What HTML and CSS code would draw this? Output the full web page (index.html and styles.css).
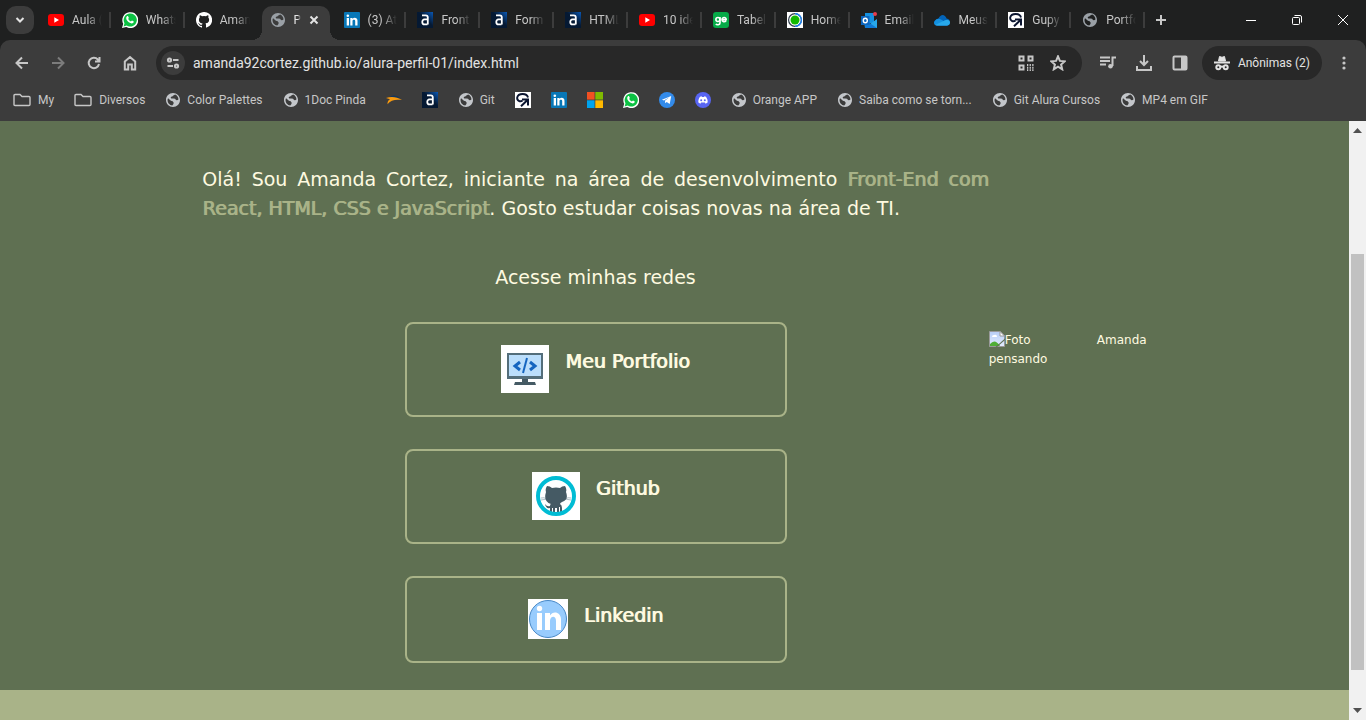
FILE: index.html
```html
<!DOCTYPE html>
<html lang="pt-BR">
<head>
<meta charset="utf-8">
<title>Portfolio</title>
<link rel="stylesheet" href="styles.css">
</head>
<body>
<svg class="sprite" aria-hidden="true">
  <defs>
    <linearGradient id="navy" x1="0" y1="1" x2="1" y2="0"><stop offset="0.55" stop-color="#051933"/><stop offset="1" stop-color="#0a58b5"/></linearGradient>
    <linearGradient id="sky" x1="0" y1="0" x2="0" y2="1"><stop offset="0" stop-color="#b7cdf5"/><stop offset="1" stop-color="#e3edff"/></linearGradient>
  </defs>
  <symbol id="youtube" viewBox="0 0 16 16"><rect y="2" width="16" height="12" rx="3" fill="#f00"/><path d="M6.3 5.3v5.4L11 8z" fill="#fff"/></symbol>
  <symbol id="whatsapp" viewBox="0 0 16 16"><path d="M0 16l1.2-4.2A8 8 0 1 1 4.200 15z" fill="#fff"/><path d="M1.600 14.400l.9-3.100A6.600 6.600 0 1 1 4.700 13.600z" fill="#0cc143"/><path d="M5 4.300c.5-.5 1-.4 1.200.1l.6 1.300c.1.400-.6 1-.6 1.200.6 1.200 1.500 2 2.700 2.500.3 0 .8-1 1.100-.9l1.500.7c.5.300 0 1.400-.5 1.800-1 .8-2.600.3-4.200-.7C5.200 9.200 4.200 7.500 4.200 6c0-.7.3-1.300.8-1.700z" fill="#fff"/></symbol>
  <symbol id="github" viewBox="0 0 16 16"><path fill="#fff" d="M8 0C3.580 0 0 3.580 0 8c0 3.540 2.290 6.530 5.470 7.590.4.070.55-.17.55-.38v-1.340c-2.230.48-2.690-1.070-2.690-1.070-.36-.92-.89-1.170-.89-1.170-.72-.5.060-.49.060-.49.8.060 1.230.83 1.230.83.71 1.220 1.870.87 2.330.66.070-.52.280-.87.5-1.070-1.780-.2-3.640-.89-3.640-3.950 0-.87.310-1.590.82-2.150-.08-.2-.36-1.020.08-2.120 0 0 .67-.21 2.200.82a7.600 7.600 0 0 1 4 0c1.530-1.040 2.200-.82 2.200-.82.44 1.100.16 1.920.08 2.120.51.560.82 1.270.82 2.150 0 3.070-1.870 3.750-3.650 3.950.29.250.54.730.54 1.480v2.200c0 .21.150.46.550.38A8 8 0 0 0 8 0z"/></symbol>
  <symbol id="globe" viewBox="2 2 20 20"><path d="M12 2C6.480 2 2 6.480 2 12s4.480 10 10 10 10-4.480 10-10S17.520 2 12 2zM5 9.500L9 13q3 0 4 3 .2 2-2 3.700C7 19.500 4.200 16 4.200 12q0-1.500.8-2.500zM15 4.300q4.500 2 4.800 7-1.500 1.300-3.500.7-.8-2-3.800-2l-3-.3q-1.500-1-.2-2.200 2-.3 2.700-1.500z"/></symbol>
  <symbol id="linkedin" viewBox="0 0 16 16"><rect width="16" height="16" rx="1" fill="#0877b7"/><circle cx="3.800" cy="3.800" r="1.300" fill="#fff"/><path d="M2.700 6H5v7.500H2.700zM6.300 6h2.200v1c1.300-2 5-1.500 5 1.700v4.800h-2.300V9.300c0-2-2.700-1.900-2.700 0v4.200H6.300z" fill="#fff"/></symbol>
  <symbol id="alura" viewBox="0 0 16 16"><rect width="16" height="16" fill="url(#navy)"/><path d="M5 3.300h3.700c1.600 0 2.100.9 2.100 2.300v7M10.300 7.400H7.500c-3 0-2.900 5 0 5h3" fill="none" stroke="#fff" stroke-width="1.800"/></symbol>
  <symbol id="ge" viewBox="0 0 16 16"><rect width="16" height="16" rx="3" fill="#06aa48"/><g fill="none" stroke="#fff" stroke-width="1.600"><circle cx="4.900" cy="7.500" r="2"/><path d="M7 5v6c0 2.100-3.200 2.100-4.200 1M9.200 7.700h4c.1-2.700-4.200-2.900-4.200 0 0 2.200 2.700 2.500 4.100 1.200"/></g></symbol>
  <symbol id="home-ring" viewBox="0 0 16 16"><path fill="#fff" d="M0 0h16v16H0z"/><circle cx="8" cy="8" r="6.400" fill="none" stroke="#303f4c" stroke-width="1.200"/><path d="M8 1.600a6.400 6.400 0 0 1 0 12.800" fill="none" stroke="#1687ff" stroke-width="1.200"/><circle cx="8" cy="8" r="4.500" fill="#11b900"/></symbol>
  <symbol id="outlook" viewBox="0 0 16 16"><path fill="#1490df" d="M4 1h9v10H4z"/><path fill="#28a8ea" d="M3 8l6 4 7-5v9H4z"/><path fill="#0f78d4" d="M4 8l12 8H4z"/><path fill="#0d65bc" d="M0 4h8.500v9H0z"/><ellipse cx="4.300" cy="8.500" rx="2" ry="2.300" fill="none" stroke="#fff" stroke-width="1.400"/><circle cx="14" cy="2" r="2" fill="#e83b4a"/></symbol>
  <symbol id="onedrive" viewBox="0 0 16 16"><path fill="#0364b8" d="M2 8c1-1 1.800-1.500 2.500-1.500C6.500 1.800 11 1.800 12.600 6.500c2.300.1 3.400 2 3.400 3.600 0 2-1.200 3.400-3.300 3.400H3C-.7 13.500-.9 8.600 2 8z"/><path fill="#1490df" d="M1 9c1-2.500 4-3 6-1.500l8 5a3 3 0 0 1-2.300 1H3C.7 13.500-.2 11.500.200 10z"/><path fill="#28a8ea" d="M1.200 13L11 8.200c3-1.500 5 .4 5 2.300s-1.200 3-3.300 3H3z"/></symbol>
  <symbol id="gupy" viewBox="0 0 16 16"><path fill="#fff" d="M0 0h16v16H0z"/><path d="M13 5.500C12 .8 3.200.8 2.200 5.500c-.4 3.300 3 4.700 5.300 3" fill="none" stroke="#0b1530" stroke-width="1.900"/><path d="M7 7.500h6v6M12.500 8L6 14.200" fill="none" stroke="#0b1530" stroke-width="2"/></symbol>
  <symbol id="folder" viewBox="0 0 18 16"><path d="M2 2.500h5l2 2h7q1 0 1 1v7q0 1-1 1H2q-1 0-1-1v-9q0-1 1-1z" fill="none" stroke="currentColor" stroke-width="1.400"/></symbol>
  <symbol id="swoosh" viewBox="0 0 16 16"><path fill="#12355f" d="M4 4.700Q9 2 14 6l-7-.5z"/><path fill="#f79a10" d="M0 6c5-2 11-1.300 16 2-6-1-11.500 0-14.500 4.200C1.400 9.500 2.500 8 4 7.300z"/></symbol>
  <symbol id="microsoft" viewBox="0 0 16 16"><path fill="#f25022" d="M0 0h7.600v7.600H0z"/><path fill="#7fba00" d="M8.300 0H16v7.600H8.300z"/><path fill="#00a4ef" d="M0 8.300h7.600V16H0z"/><path fill="#ffb900" d="M8.300 8.300H16V16H8.300z"/></symbol>
  <symbol id="telegram" viewBox="0 0 16 16"><circle cx="8" cy="8" r="8" fill="#338bea"/><path fill="#fff" d="M2.900 7.800l9.300-3.700-1.500 8-3-2.200-1.500 1.400-.2-2.500 4.200-3.500-5.200 3.300z"/></symbol>
  <symbol id="discord" viewBox="0 0 16 16"><circle cx="8" cy="8" r="8" fill="#5865f2"/><path fill="#fff" d="M5 4.700l1.600-.4.400.7h2l.4-.7 1.600.4c1.300 1.900 1.900 3.700 1.600 5.800l-2 1.200-.7-1.100H6.100l-.7 1.100-2-1.200c-.3-2.100.4-4.100 1.600-5.800z"/><g fill="#5865f2"><circle cx="6.200" cy="8.200" r="1"/><circle cx="9.800" cy="8.200" r="1"/></g></symbol>
</svg>

<header class="browser">
  <div class="tabstrip">
    <button class="tab-search" aria-label="Pesquisar guias"><svg width="10" height="10" viewBox="0 0 10 10"><path d="M1.500 3L5 6.500 8.500 3"/></svg></button>
    <nav class="tabs" aria-label="Guias">
      <button class="tab"><svg class="icon"><use href="#youtube"/></svg><span>Aula (</span></button>
      <button class="tab"><svg class="icon"><use href="#whatsapp"/></svg><span>Whats</span></button>
      <button class="tab"><svg class="icon"><use href="#github"/></svg><span>Aman</span></button>
      <button class="tab active"><svg class="icon globe muted"><use href="#globe"/></svg><span>P</span><svg class="close" viewBox="0 0 10 10"><path d="M1.500 1.500l7 7M8.500 1.500l-7 7"/></svg></button>
      <button class="tab"><svg class="icon"><use href="#linkedin"/></svg><span>(3) At</span></button>
      <button class="tab"><svg class="icon"><use href="#alura"/></svg><span>Front</span></button>
      <button class="tab"><svg class="icon"><use href="#alura"/></svg><span>Form</span></button>
      <button class="tab"><svg class="icon"><use href="#alura"/></svg><span>HTML</span></button>
      <button class="tab"><svg class="icon"><use href="#youtube"/></svg><span>10 ide</span></button>
      <button class="tab"><svg class="icon"><use href="#ge"/></svg><span>Tabel</span></button>
      <button class="tab"><svg class="icon"><use href="#home-ring"/></svg><span>Home</span></button>
      <button class="tab"><svg class="icon"><use href="#outlook"/></svg><span>Email</span></button>
      <button class="tab"><svg class="icon"><use href="#onedrive"/></svg><span>Meus</span></button>
      <button class="tab"><svg class="icon"><use href="#gupy"/></svg><span>Gupy</span></button>
      <button class="tab"><svg class="icon globe muted"><use href="#globe"/></svg><span>Portfo</span></button>
    </nav>
    <button class="new-tab" aria-label="Nova guia"><svg width="12" height="12" viewBox="0 0 12 12"><path d="M6 1v10M1 6h10"/></svg></button>
    <div class="window-controls">
      <button aria-label="Minimizar"><svg width="12" height="12" viewBox="0 0 12 12"><path d="M1 6.500h10"/></svg></button>
      <button aria-label="Restaurar"><svg width="12" height="12" viewBox="0 0 12 12"><rect x="1.500" y="3.500" width="7" height="7" rx="1"/><path d="M3.500 1.500H9q1.500 0 1.500 1.500v5.500"/></svg></button>
      <button aria-label="Fechar"><svg width="12" height="12" viewBox="0 0 12 12"><path d="M1 1l10 10M11 1L1 11"/></svg></button>
    </div>
  </div>

  <div class="toolbar">
    <button class="tool" aria-label="Voltar"><svg class="icon" viewBox="0 0 16 16"><path d="M14 8H3M8 2.500L2.500 8 8 13.500"/></svg></button>
    <button class="tool dim" aria-label="Avançar"><svg class="icon" viewBox="0 0 16 16"><path d="M2 8h11M8 2.500L13.500 8 8 13.500"/></svg></button>
    <button class="tool" aria-label="Recarregar"><svg class="icon" viewBox="0 0 16 16"><path d="M13 9a5.200 5.200 0 1 1-1.200-4.500L13.500 6M13.500 2v4.500H9"/></svg></button>
    <button class="tool" aria-label="Página inicial"><svg class="icon" viewBox="0 0 16 16"><path d="M2.800 6.500L8 2l5.200 4.500v8H9.800V9.500H6.200v5H2.800z"/></svg></button>
    <div class="omnibox">
      <button class="site-info" aria-label="Informações do site"><svg class="icon" viewBox="0 0 16 16"><circle cx="4.500" cy="5" r="1.600"/><path d="M8 5h5.500M2.500 11H8"/><circle cx="11.500" cy="11" r="1.600"/></svg></button>
      <input type="text" aria-label="Endereço" value="amanda92cortez.github.io/alura-perfil-01/index.html">
      <button class="tool" aria-label="Código QR"><svg class="icon" viewBox="0 0 16 16"><path d="M1.500 1.500h4v4h-4zM10.500 1.500h4v4h-4zM1.500 10.500h4v4h-4z"/><path d="M9 10h7M9 12.700h7M9 15.200h7" stroke-dasharray="1.300 1.300"/></svg></button>
      <button class="tool" aria-label="Favoritar"><svg class="icon" viewBox="0 0 16 16"><path d="M8 1.300l1.900 4.600 4.900.4-3.700 3.200 1.100 4.800L8 11.700l-4.200 2.600 1.100-4.800L1.200 6.300l4.900-.4z"/></svg></button>
    </div>
    <button class="tool" aria-label="Mídia"><svg class="icon" viewBox="0 0 16 16"><path d="M0 2.500h10M0 6h10M0 9.500h6M16 2.500h-3.500V11"/><circle cx="10.500" cy="11.300" r="2.300" fill="currentColor" stroke="none"/></svg></button>
    <button class="tool" aria-label="Downloads"><svg class="icon" viewBox="0 0 16 16"><path d="M8 0v10M4 6l4 4 4-4M1 11v4h14v-4"/></svg></button>
    <button class="tool" aria-label="Painel lateral"><svg class="icon" viewBox="0 0 16 16"><rect x="1.500" y="1.500" width="13" height="13" rx="1"/><path d="M9 1h6v14H9z" fill="currentColor" stroke="none"/></svg></button>
    <button class="incognito"><svg class="icon" viewBox="0 0 16 16"><path d="M4.500 6l1-4.500L8 2.300l2.500-.8 1 4.500z" fill="currentColor" stroke-width="1"/><path d="M0 7.500h16M6.500 12q1.500-1 3 0"/><circle cx="4.300" cy="12.300" r="2"/><circle cx="11.700" cy="12.300" r="2"/></svg>Anônimas (2)</button>
    <button class="tool menu" aria-label="Menu"><svg class="icon" viewBox="0 0 16 16"><g fill="currentColor" stroke="none"><circle cx="8" cy="3" r="1.600"/><circle cx="8" cy="8" r="1.600"/><circle cx="8" cy="13" r="1.600"/></g></svg></button>
  </div>

  <nav class="bookmarks" aria-label="Favoritos">
    <a href="#"><svg class="icon folder"><use href="#folder"/></svg>My</a>
    <a href="#"><svg class="icon folder"><use href="#folder"/></svg>Diversos</a>
    <a href="#"><svg class="icon globe"><use href="#globe"/></svg>Color Palettes</a>
    <a href="#"><svg class="icon globe"><use href="#globe"/></svg>1Doc Pinda</a>
    <a href="#" aria-label="Loja"><svg class="icon"><use href="#swoosh"/></svg></a>
    <a href="#" aria-label="Alura"><svg class="icon"><use href="#alura"/></svg></a>
    <a href="#"><svg class="icon globe"><use href="#globe"/></svg>Git</a>
    <a href="#" aria-label="Gupy"><svg class="icon"><use href="#gupy"/></svg></a>
    <a href="#" aria-label="LinkedIn"><svg class="icon"><use href="#linkedin"/></svg></a>
    <a href="#" aria-label="Microsoft"><svg class="icon"><use href="#microsoft"/></svg></a>
    <a href="#" aria-label="WhatsApp"><svg class="icon"><use href="#whatsapp"/></svg></a>
    <a href="#" aria-label="Telegram"><svg class="icon"><use href="#telegram"/></svg></a>
    <a href="#" aria-label="Discord"><svg class="icon"><use href="#discord"/></svg></a>
    <a href="#"><svg class="icon globe"><use href="#globe"/></svg>Orange APP</a>
    <a href="#"><svg class="icon globe"><use href="#globe"/></svg>Saiba como se torn...</a>
    <a href="#"><svg class="icon globe"><use href="#globe"/></svg>Git Alura Cursos</a>
    <a href="#"><svg class="icon globe"><use href="#globe"/></svg>MP4 em GIF</a>
  </nav>
</header>

<div class="viewport">
  <div class="page">
    <main class="presentation">
      <section class="about">
        <p class="intro">Olá! Sou Amanda Cortez, iniciante na área de desenvolvimento <strong>Front-End com React, HTML, CSS e JavaScript</strong>. Gosto estudar coisas novas na área de TI.</p>
        <h2 class="subtitle">Acesse minhas redes</h2>
        <div class="links">
          <a class="link-card" href="#">
            <svg width="48" height="48" viewBox="0 0 48 48"><path fill="#fff" d="M0 0h48v48H0z"/><path fill="#455a64" d="M21 33h6v4h7l1 3H13l1-3h7z"/><path fill="#546e7a" d="M6 8h36v26H6z"/><path fill="#bbdefb" d="M8 10h32v21H8z"/><path d="M19 17l-5 4 5 4M29 17l5 4-5 4" fill="none" stroke="#1565c0" stroke-width="3"/><path d="M26 13l-4 15" stroke="#1565c0" stroke-width="2"/></svg>
            <span>Meu Portfolio</span>
          </a>
          <a class="link-card" href="#">
            <svg width="48" height="48" viewBox="0 0 48 48"><path fill="#fff" d="M0 0h48v48H0z"/><path d="M9 26q3-1 6 1M9 28l6-1M39 26q-3-1-6 1M39 28l-6-1" stroke="#b0bec5" fill="none"/><path fill="#455a64" d="M15 14q3 0 5 2 4-1 8 0 2-2 5-2 2 3 1 6 3 8-4 10-2 1-2 2 2 1 2 4v4h-2v-5h-1v7h-2v-6h-2v6h-2v-6h-1v5h-2v-5q-4 1-5-4 2 3 5 2 0-2 1-2-8-2-5-12-1-3 1-6z"/><circle cx="24" cy="24" r="18" fill="none" stroke="#00bcd4" stroke-width="4"/></svg>
            <span>Github</span>
          </a>
          <a class="link-card" href="#">
            <svg width="40" height="40" viewBox="0 0 40 40"><path fill="#fff" d="M0 0h40v40H0z"/><circle cx="20" cy="20" r="18.500" fill="#98ccfd" stroke="#4788c7"/><circle cx="11.500" cy="9.500" r="2.700" fill="#fff"/><path fill="#fff" d="M9 14h5v17H9zM17 14h5v2.500c3-5 11-3.500 11 4V31h-5v-9c0-6-6-5-6 0v9h-5z"/></svg>
            <span>Linkedin</span>
          </a>
        </div>
      </section>
      <div class="photo" role="img" aria-label="Foto Amanda pensando"><svg width="16" height="16" viewBox="0 0 16 16"><path fill="url(#sky)" stroke="#999" d="M.5.500H11L15.500 5v10.500H.5z"/><path fill="#fff" stroke="#999" d="M11 .5V5h4.500z"/><path fill="#fff" d="M3 6q0-2 2-2 3-1 3 2z"/><path fill="#4fae35" d="M1 13q5-6 10 2H1z"/><path fill="#5f7052" d="M16 7.500V9l-8 7H6.500z"/></svg>Foto Amanda pensando</div>
    </main>
    <footer class="footer"></footer>
  </div>
  <div class="scrollbar" aria-hidden="true">
    <svg width="9" height="5" viewBox="0 0 9 5"><path d="M0 5l4.500-5L9 5z"/></svg>
    <div class="track"><div class="thumb"></div></div>
    <svg width="9" height="5" viewBox="0 0 9 5"><path d="M0 0l4.500 5L9 0z"/></svg>
  </div>
</div>
</body>
</html>
```
FILE: styles.css
```css
* { box-sizing: border-box; }

body {
  margin: 0;
  height: 100vh;
  display: flex;
  flex-direction: column;
  overflow: hidden;
  font-family: Roboto, "Open Sans", sans-serif;
  font-size: 12px;
}

button {
  border: 0;
  padding: 0;
  background: none;
  color: inherit;
  font: inherit;
  display: flex;
  align-items: center;
  justify-content: center;
}

a { color: inherit; text-decoration: none; }
svg { flex: none; }
.sprite { position: absolute; width: 0; height: 0; }
.icon { width: 16px; height: 16px; }
.folder { width: 18px; margin-right: 1px; }
.globe { fill: #c3c6ca; padding: 1px; }
.globe.muted { fill: #9aa0a6; }

/* Browser window */
.browser {
  background: #1f2020;
  color: #c7c7c7;
}

.browser button svg { stroke: currentColor; stroke-width: 2; fill: none; }
.browser .tab .icon { stroke: none; fill: #9aa0a6; }

.tabstrip {
  display: flex;
  height: 40px;
  padding-left: 6px;
}

.tab-search {
  width: 28px;
  height: 28px;
  margin: 6px 6px 0 0;
  border-radius: 10px;
  background: #3c3c3c;
  color: #e3e3e3;
}

.tabs { display: flex; flex: 0 1 1108px; min-width: 0; }

.tab {
  flex: 1 1 0;
  min-width: 0;
  position: relative;
  justify-content: flex-start;
  gap: 8px;
  padding: 0 12px 0 8px;
}

.tab span {
  flex: 1;
  min-width: 0;
  overflow: hidden;
  white-space: nowrap;
  text-align: left;
  -webkit-mask-image: linear-gradient(to right, #000 50%, transparent);
  mask-image: linear-gradient(to right, #000 50%, transparent);
}

.tab::after {
  content: "";
  position: absolute;
  right: 3px;
  top: 12px;
  width: 2px;
  height: 16px;
  background: #3c3c3c;
}

.tab:nth-child(3)::after { display: none; }

.tab.active {
  flex: 0 0 68px;
  margin: 6px 6px 0 0;
  padding: 0 11px 6px 8px;
  border-radius: 10px 10px 0 0;
  background: #3c3c3c;
  color: #e3e3e3;
}

.tab.active::before,
.tab.active::after {
  content: "";
  position: absolute;
  top: auto;
  bottom: 0;
  width: 10px;
  height: 10px;
}

.tab.active::before {
  right: 100%;
  background: radial-gradient(circle at 0 0, transparent 10px, #3c3c3c 10px);
}

.tab.active::after {
  right: auto;
  left: 100%;
  background: radial-gradient(circle at 100% 0, transparent 10px, #3c3c3c 10px);
}

.close { width: 10px; height: 10px; }
.new-tab { width: 26px; }

.window-controls {
  display: flex;
  margin-left: auto;
  color: #fff;
}

.window-controls button { width: 46px; }
.browser .window-controls svg { stroke-width: 1; }
.browser .new-tab svg, .browser .close { stroke-width: 2; }

.toolbar {
  display: flex;
  align-items: center;
  gap: 8px;
  height: 46px;
  padding: 0 8px;
  border-radius: 10px 10px 0 0;
  background: #3c3c3c;
}

.tool { width: 28px; height: 28px; }
.dim { color: #7c7c7c; }

.omnibox {
  flex: 1;
  display: flex;
  align-items: center;
  gap: 4px;
  height: 34px;
  margin: 0 4px;
  padding: 0 10px 0 5px;
  border-radius: 17px;
  background: #282828;
}

.site-info {
  width: 24px;
  height: 24px;
  border-radius: 12px;
  background: #3c3c3c;
}

.omnibox input {
  flex: 1;
  min-width: 0;
  margin-left: 4px;
  padding: 0;
  border: 0;
  outline: 0;
  background: none;
  color: #e3e3e3;
  font: inherit;
  font-size: 14px;
}

.incognito {
  height: 34px;
  padding: 0 12px;
  gap: 8px;
  border-radius: 17px;
  background: #282828;
  color: #e3e3e3;
  white-space: nowrap;
}

.bookmarks {
  display: flex;
  align-items: center;
  gap: 20px;
  height: 35px;
  padding: 0 14px 7px 13px;
  background: #3c3c3c;
  white-space: nowrap;
}

.bookmarks a { display: flex; align-items: center; gap: 6px; }

/* Web page */
.viewport { flex: 1; display: flex; min-height: 0; }

.page {
  flex: 1;
  display: flex;
  flex-direction: column;
  background: #5f7052;
  color: #fefae0;
  font-family: "DejaVu Sans", Verdana, sans-serif;
}

.presentation {
  display: flex;
  align-items: center;
  padding: 44px 15% 27px;
}

.about { flex: 1; }

.intro {
  margin: 0 0 40px;
  font-size: 19px;
  line-height: 29px;
  text-align: justify;
}

.intro strong {
  color: #a9b388;
  font-weight: 400;
  text-shadow: 1px 0 0 currentColor;
}

.subtitle {
  margin: 0 0 30px;
  font-size: 19px;
  font-weight: 400;
  line-height: 29px;
  text-align: center;
}

.links {
  display: flex;
  flex-direction: column;
  align-items: center;
  gap: 32px;
}

.link-card {
  display: flex;
  justify-content: center;
  gap: 16px;
  width: 382px;
  padding: 21px 0 22px;
  border: 2px solid #a9b388;
  border-radius: 8px;
  font-size: 19px;
  line-height: 32px;
  text-shadow: 1px 0 0 currentColor;
}

.photo {
  width: 158px;
  min-height: 166px;
  font-size: 12px;
  line-height: 19px;
  text-align: justify;
}

.photo svg { vertical-align: text-bottom; }
.footer { flex: 1; background: #a9b388; }

.scrollbar {
  width: 17px;
  display: flex;
  flex-direction: column;
  align-items: center;
  padding: 7px 2px;
  background: #f1f1f1;
  fill: #505050;
}

.track { flex: 1; align-self: stretch; padding: 121px 0 38px; }
.thumb { height: 100%; background: #c1c1c1; }
```
